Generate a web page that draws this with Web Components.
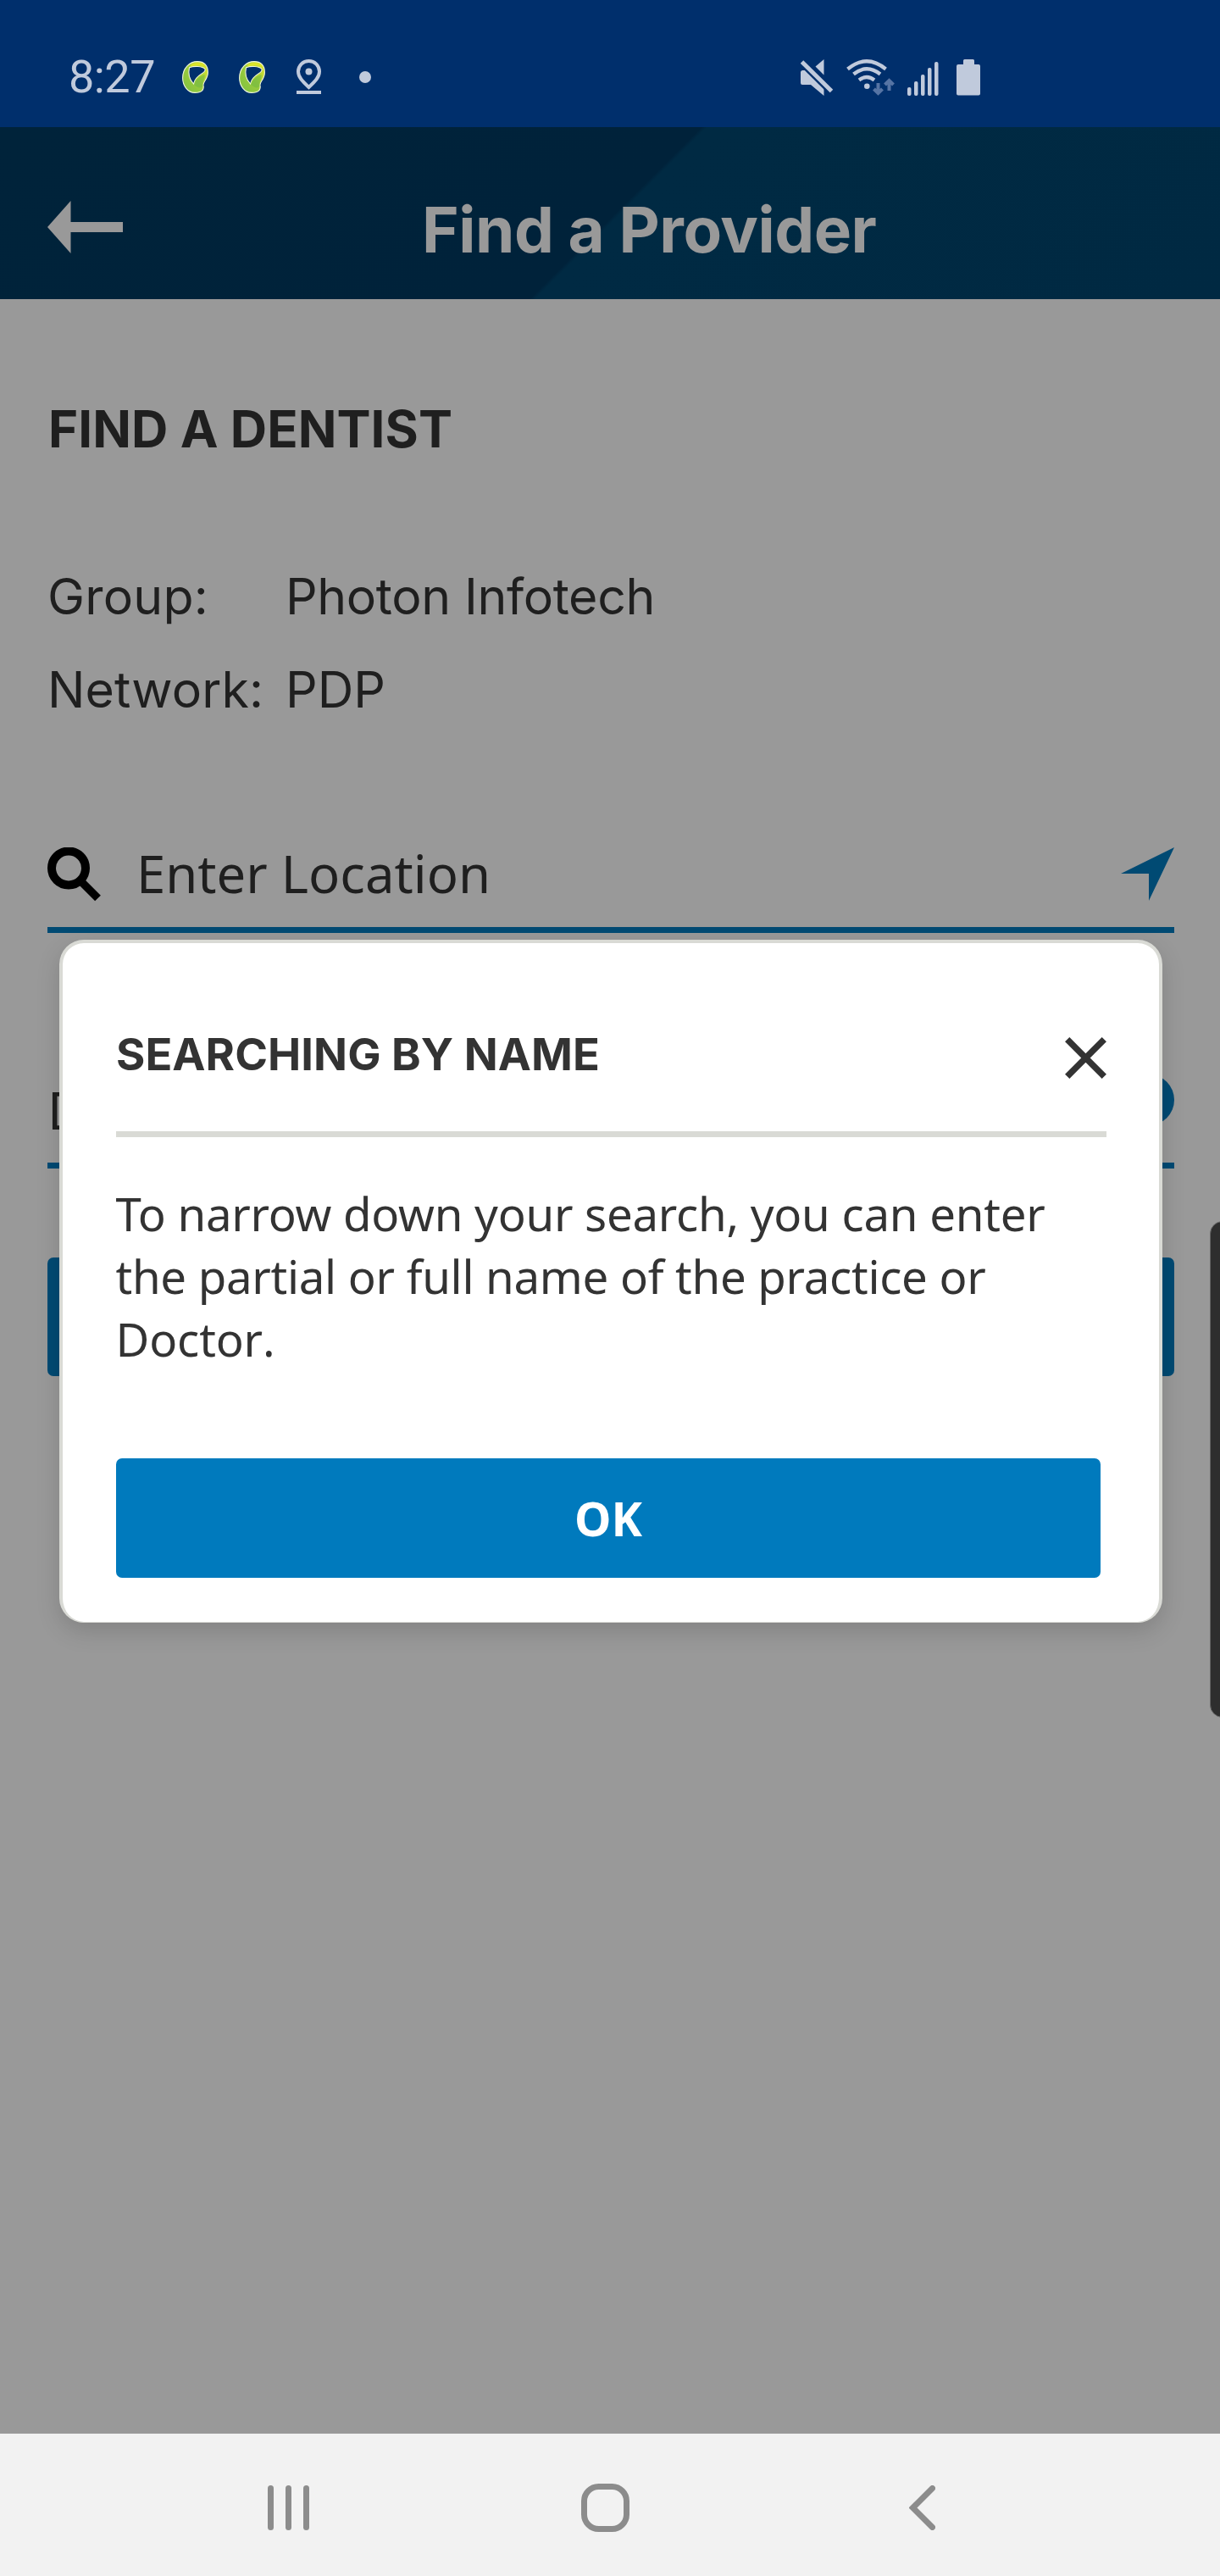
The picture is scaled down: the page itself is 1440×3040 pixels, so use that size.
<!DOCTYPE html>
<html lang="en">
<head>
<meta charset="utf-8">
<title>Find a Provider</title>
<style>
html,body{margin:0;padding:0}
body{width:1440px;height:3040px;overflow:hidden;background:#999;font-family:"Noto Sans","Open Sans",sans-serif;color:#1f1f1f}
</style>
</head>
<body>
<provider-app></provider-app>
<script>
const define=(name,html,setup)=>customElements.define(name,class extends HTMLElement{
  constructor(){super();this.attachShadow({mode:'open'}).innerHTML=html;}
  connectedCallback(){if(setup)setup(this,this.shadowRoot);}
});

/* One line of text tracked so that it takes exactly the width given in pixels. */
define('tracked-text',`<style>:host{display:block;white-space:pre}span{display:inline-block}</style><span><slot></slot></span>`,(el,root)=>{
  const span=root.querySelector('span');
  const want=+el.getAttribute('width'),have=span.getBoundingClientRect().width;
  const n=el.textContent.length;
  if(want&&n)span.style.letterSpacing=((want-have)/n).toFixed(3)+'px';
});

define('loop-logo',`<style>:host{display:block;flex:none;width:31px;height:38px}svg{display:block}</style>
<svg width="31" height="38" viewBox="0 0 31 38"><defs><linearGradient id="g" x1="0" y1="1" x2="1" y2="0"><stop offset="0" stop-color="#7dc142"/><stop offset=".5" stop-color="#9bcb3c"/><stop offset="1" stop-color="#e4e72b"/></linearGradient></defs><path d="M18 .6C9 .6.6 8 .6 20c0 9 6 17.400 14.400 17.400 8 0 11-3 10-9-.5-4 5.400-7 5.400-15C30.400 5 26 .6 18 .6zM8.500 7.800C14 5.500 24 6 27 9.500c2 5.500-11 5-13.500 17.500-5.500-6-6.500-13-5-19.200z" fill="url(#g)" fill-rule="evenodd" stroke="#f0f6df" stroke-width="1.100"/><path d="M10 4.500C15 .800 24 1 27.500 6.500c-5-2-11-1-17 0z" fill="#dce42a"/><path d="M14.500 28c2-7 7-10 12-12 1 5-3 8-2 13-2 4-6 3-10-1z" fill="#6fb744" opacity=".55"/></svg>`);

define('status-bar',`<style>
:host{display:flex;align-items:center;height:150px;background:#002f6c;color:#c0cadc;font-family:Roboto,sans-serif;box-sizing:border-box;padding:32px 283px 0 81px}
svg{display:block;flex:none}.time{font-size:54px;line-height:118px}
.logo{margin-left:32px}.logo+.logo{margin-left:36px}.pin{margin-left:37px}.dot{margin-left:45px}.right{margin-left:auto}
</style>
<tracked-text class="time" width="102">8:27</tracked-text>
<loop-logo class="logo"></loop-logo><loop-logo class="logo"></loop-logo>
<svg class="pin" width="29" height="42" viewBox="0 0 29 42" fill="none" stroke="currentColor"><path d="M14.500 2C7.500 2 2 7.500 2 14.500 2 21 7 26 14.500 33 22 26 27 21 27 14.500 27 7.500 21.500 2 14.500 2z" stroke-width="4"/><circle cx="14.500" cy="14.500" r="4" fill="currentColor" stroke="none"/><path d="M0 39h29" stroke-width="4"/></svg>
<svg class="dot" width="14" height="14"><circle cx="7" cy="7" r="7" fill="currentColor"/></svg>
<svg class="right" width="212" height="43" viewBox="945 68 212 43" fill="currentColor">
<path d="M962.500 76.500L972.500 68v18.500zM945 83.500q0-2.500 2.500-2.500h6L972.500 101v10L957 98h-10q-2 0-2-2z"/><path d="M946.500 71.500L981.500 106" stroke="#002f6c" stroke-width="9"/><path d="M946.500 71L981.500 105.500" stroke="currentColor" stroke-width="5"/>
<g fill="none" stroke="currentColor" stroke-width="4.300"><path d="M1000.500 79.500q22.500-18.500 45 0M1007.500 85.500q15.500-12.500 31.500 0M1014 92.500q9-7 18 0"/></g><circle cx="1023.300" cy="99.700" r="3.300"/>
<g fill="none" stroke="#5674a4" stroke-width="4"><path d="M1036.500 96v11M1031.500 103l5 5 5-5M1049.500 105V94M1044.500 98l5-5 5 5"/></g>
<g><rect x="1071" y="101" width="4.500" height="10" rx="2"/><rect x="1079" y="94" width="4.500" height="17" rx="2"/><rect x="1087" y="86" width="4.500" height="25" rx="2"/><rect x="1095" y="78" width="4.500" height="33" rx="2"/><rect x="1103" y="71" width="4.500" height="40" rx="2"/></g>
<path d="M1137 74v-4.500q0-1.500 1.500-1.500h10q1.500 0 1.500 1.500V74h5q2 0 2 2v32.500q0 2-2 2h-24q-2 0-2-2V76q0-2 2-2z"/></svg>`);

define('app-header',`<style>
:host{display:flex;align-items:center;height:203px;box-sizing:border-box;padding:38px 56px 0;color:#999;background:linear-gradient(135deg,#00233a 0,#00223a 50.400%,#002a43 50.800%,#002942 100%)}
svg{display:block;margin-top:-5px}.t{margin-left:353px;font:700 74.500px/100px Inter,sans-serif}
</style>
<svg width="89" height="62" viewBox="0 0 89 62"><path d="M0 31L27.500 0v25H89v12H27.500v25z" fill="#999"/></svg>
<tracked-text class="t" width="536.500">Find a Provider</tracked-text>`);

define('info-row',`<style>:host{display:flex;height:110px;font:400 59px/110px Inter,sans-serif}
.k{width:281px}</style>
<tracked-text class="k"></tracked-text><tracked-text class="v"></tracked-text>`,(el,r)=>{
  for(const c of ['k','v']){const t=document.createElement('tracked-text');t.className=c;t.textContent=el.getAttribute(c);t.setAttribute('width',el.getAttribute(c+'w'));r.querySelector('.'+c).replaceWith(t);}
});

define('line-field',`<style>:host{display:flex;align-items:center;height:125px;border-bottom:7px solid #004a73;font-size:61.600px;line-height:84px}
::slotted(.end){margin-left:auto}</style><slot></slot>`);

define('pop-dialog',`<style>
:host{display:block;box-sizing:border-box;width:1302px;height:805.500px;border:4px solid #d9dad5;border-bottom-width:1px;border-radius:29px;background:#fff;color:#333;box-shadow:0 10px 28px rgba(0,0,0,.15);padding:88px 62px 0 63px}
.head{display:flex;justify-content:space-between;align-items:center;height:134px;border-bottom:7.500px solid #d9dad5}
.head tracked-text{font:700 52.500px/84px Inter,sans-serif;margin-top:-49px}.head svg{margin-top:-39px}
.p{margin:53px 0 0 -.5px;font-size:54.600px;line-height:74px}.nk{font-kerning:none}
.ok{margin-top:104px;width:1162px;height:140.500px;border-radius:7px;background:#007abd;color:#fff;display:flex;align-items:center;justify-content:center;font-size:55px;line-height:75px;font-weight:700}
</style>
<div class="head"><tracked-text width="571">SEARCHING BY NAME</tracked-text><svg width="49" height="49"><path d="M2.700 2.700L46.300 46.300M46.300 2.700L2.700 46.300" stroke="#333" stroke-width="7.500"/></svg></div>
<div class="p"><tracked-text width="1097">To narrow down your search, you can enter</tracked-text><tracked-text width="1027">the partial or full name of the practice or</tracked-text><tracked-text class="nk" width="188">Doctor.</tracked-text></div>
<div class="ok">OK</div>`);

define('nav-bar',`<style>:host{display:flex;align-items:center;height:168px;box-sizing:border-box;padding:7px 336px 0 316px;justify-content:space-between;background:#f2f2f2}svg{display:block}</style>
<svg width="49" height="53" fill="#8c8c8c"><rect width="7" height="53" rx="3.500"/><rect x="21" width="7" height="53" rx="3.500"/><rect x="42" width="7" height="53" rx="3.500"/></svg>
<svg width="57" height="57" style="margin-right:9px"><rect x="3.500" y="3.500" width="50" height="50" rx="17" fill="none" stroke="#8c8c8c" stroke-width="7"/></svg>
<svg width="31" height="53"><path d="M27.500 3.500L4.500 26.500 27.500 49.500" fill="none" stroke="#8c8c8c" stroke-width="7" stroke-linecap="round"/></svg>`);

define('provider-app',`<style>
:host{display:flex;flex-direction:column;width:1440px;height:3040px;position:relative;overflow:hidden;background:#999}
main{flex:1;padding:123px 54px 0 56px}
.h{font:700 60px/60px Inter,sans-serif;padding-left:1px}
.rows{margin-top:112.500px}.f1{margin-top:100.500px}.f2{margin-top:146px}
.btn{margin-top:105px;height:140px;border-radius:7px;background:#004a73}
.dlg{position:absolute;left:70px;top:1109px}
.edge{position:absolute;left:1428px;top:1441px;width:30px;height:586px;border-radius:16px;background:#2e2e2e;border:1px solid #666;box-sizing:border-box}
</style>
<status-bar></status-bar><app-header></app-header>
<main>
<tracked-text class="h" width="477">FIND A DENTIST</tracked-text>
<div class="rows"><info-row k="Group:" kw="190" v="Photon Infotech" vw="436"></info-row><info-row k="Network:" kw="255" v="PDP" vw="118"></info-row></div>
<line-field class="f1"><svg width="64" height="64"><circle cx="25" cy="24.500" r="20" fill="none" stroke="#000" stroke-width="10"/><path d="M38 38.500L59.500 60" stroke="#000" stroke-width="9.500"/></svg><tracked-text width="418" style="margin:-3px 0 0 41px">Enter Location</tracked-text><svg class="end" width="63" height="63"><path d="M0 31L63 0 33 63V31z" fill="#004a73"/></svg></line-field>
<line-field class="f2"><span style="margin-top:-2px">D</span><svg class="end" width="60" height="60" style="margin-bottom:23px"><circle cx="30" cy="30" r="30" fill="#004a73"/></svg></line-field>
<div class="btn"></div>
</main>
<nav-bar></nav-bar>
<pop-dialog class="dlg"></pop-dialog><div class="edge"></div>`);
</script>
</body>
</html>
